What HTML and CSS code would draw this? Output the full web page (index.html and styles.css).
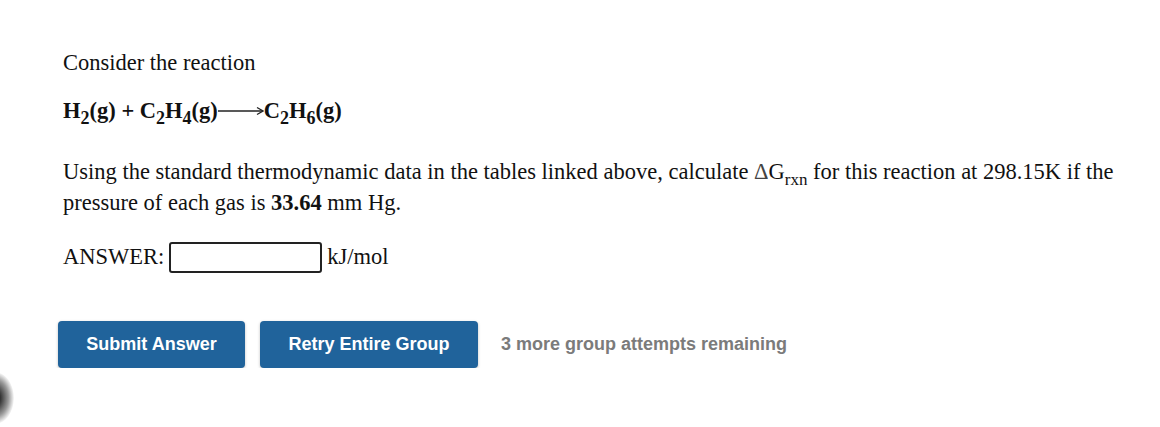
FILE: index.html
```html
<!DOCTYPE html>
<html>
<head>
<meta charset="utf-8">
<link rel="stylesheet" href="styles.css">
</head>
<body>
<div class="page">
  <p class="intro">Consider the reaction</p>
  <p class="reaction"><b>H<sub>2</sub>(g) + C<sub>2</sub>H<sub>4</sub>(g)<svg class="arrow" width="46" height="12" viewBox="0 0 46 12"><line x1="0" y1="6" x2="44" y2="6" stroke="#222" stroke-width="1.4"/><path d="M39 2.5 L45 6 L39 9.5" fill="none" stroke="#222" stroke-width="1.3"/></svg>C<sub>2</sub>H<sub>6</sub>(g)</b></p>
  <p class="question">Using the standard thermodynamic data in the tables linked above, calculate <span class="delta">Δ</span>G<sub class="rxn">rxn</sub> for this reaction at 298.15K if the pressure of each gas is <b>33.64</b> mm Hg.</p>
  <div class="answer">
    <span>ANSWER:</span>
    <input class="answer-input" type="text">
    <span>kJ/mol</span>
  </div>
  <div class="actions">
    <button class="btn btn-submit">Submit Answer</button>
    <button class="btn btn-retry">Retry Entire Group</button>
    <span class="remaining">3 more group attempts remaining</span>
  </div>
</div>
<div class="blob"></div>
</body>
</html>
```
FILE: styles.css
```css
html, body {
  margin: 0;
  padding: 0;
  background: #fff;
}
body {
  font-family: "Liberation Serif", "Times New Roman", serif;
  font-size: 22.5px;
  color: #111;
  overflow: hidden;
}
.page {
  padding: 49px 30px 0 63px;
}
p {
  margin: 0;
}
.intro {
  line-height: 28px;
}
.reaction {
  margin-top: 20px;
  line-height: 28px;
}
.reaction sub {
  font-size: 18px;
  vertical-align: -6px;
  line-height: 0;
}
.arrow {
  vertical-align: 1px;
}
.question {
  margin-top: 31px;
  line-height: 31px;
}
.question sub {
  font-size: 17px;
  vertical-align: -6px;
  line-height: 0;
}
.delta {
  color: #444;
}
.answer {
  margin-top: 23px;
  display: flex;
  align-items: center;
  gap: 4px;
  height: 32px;
}
.answer-input {
  width: 153px;
  height: 31px;
  box-sizing: border-box;
  border: 2px solid #222;
  border-radius: 3px;
  margin: 0 1px 0 1px;
  padding: 0;
  font: inherit;
}
.actions {
  margin-top: 48px;
  margin-left: -5px;
  display: flex;
  align-items: center;
  gap: 15px;
}
.btn {
  font-family: "Liberation Sans", Arial, sans-serif;
  font-weight: bold;
  font-size: 18px;
  color: #fff;
  background: #20639b;
  border: none;
  border-radius: 4px;
  height: 47px;
  padding: 0;
  box-shadow: 0 1px 3px rgba(0,0,0,0.25);
}
.btn-submit {
  width: 187px;
}
.btn-retry {
  width: 218px;
}
.remaining {
  font-family: "Liberation Sans", Arial, sans-serif;
  font-weight: bold;
  font-size: 18px;
  color: #7b7b7b;
  margin-left: 8px;
}
.blob {
  position: absolute;
  left: -24px;
  top: 372px;
  width: 38px;
  height: 52px;
  border-radius: 50%;
  background: radial-gradient(ellipse at center, rgba(0,0,0,0.8) 20%, rgba(0,0,0,0.4) 50%, rgba(0,0,0,0) 72%);
}
```
